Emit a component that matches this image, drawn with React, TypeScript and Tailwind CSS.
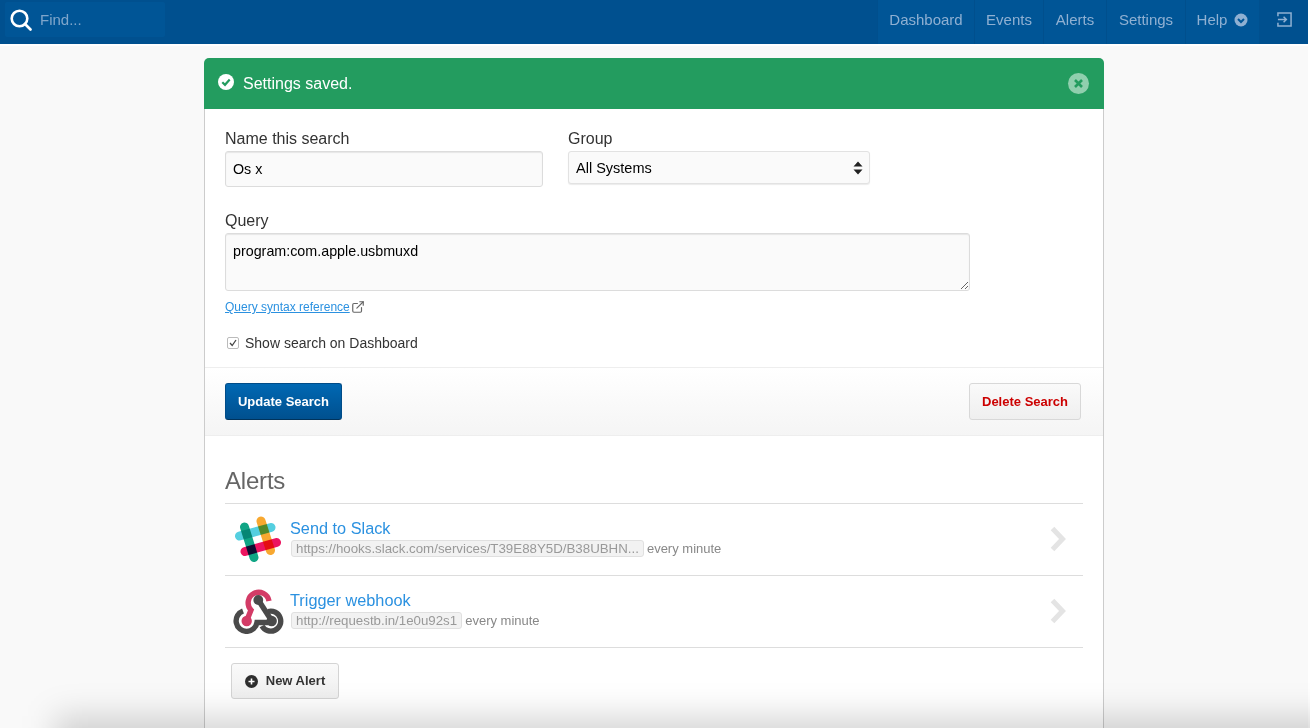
import { ExternalLink } from 'lucide-react';

const SlackLogo = () => (
  <svg width="48" height="48" viewBox="0 0 48 48" className="ml-[2px] shrink-0">
    <g strokeWidth="9" strokeLinecap="round" fill="none">
      <path d="M4.5 20 L36 11.5" stroke="#55cfe0" className="mix-blend-multiply" />
      <path d="M10 35.5 L41.5 26.5" stroke="#ec1560" className="mix-blend-multiply" />
      <path d="M9.5 11 L19 41.5" stroke="#10a585" className="mix-blend-multiply" />
      <path d="M26 5 L35.5 34.5" stroke="#f8a830" className="mix-blend-multiply" />
    </g>
  </svg>
);

const WebhookLogo = () => (
  <svg width="51" height="47" viewBox="0 0 51 47" className="mb-[2px] shrink-0">
    <g fill="none" strokeWidth="5.4">
      <path d="M25.3 13 L38.7 33.7" stroke="#4a4a4a" />
      <path d="M10 24 A10.5 10.5 0 1 0 24 35.5 H38.7" stroke="#4a4a4a" />
      <path d="M35 24.5 A10 10 0 1 1 29 39" stroke="#4a4a4a" />
      <path d="M36 14 A10.5 10.5 0 1 0 18 23 L13.7 33.7" stroke="#d33b66" />
    </g>
    <circle cx="25.3" cy="13" r="4.9" fill="#4a4a4a" />
    <circle cx="13.7" cy="34" r="5.2" fill="#d33b66" />
    <circle cx="38.7" cy="34" r="5.2" fill="#4a4a4a" />
  </svg>
);

const Chevron = () => (
  <svg width="16" height="26" viewBox="0 0 16 26" className="shrink-0">
    <path d="M2.5 2.5 L12.5 13 L2.5 23.5" stroke="#e4e4e4" strokeWidth="5" fill="none" />
  </svg>
);

const navItems = [
  { label: 'Dashboard', w: 'w-[97px]' },
  { label: 'Events', w: 'w-[69px]' },
  { label: 'Alerts', w: 'w-[63px]' },
  { label: 'Settings', w: 'w-[79px]' },
];

const alerts = [
  {
    title: 'Send to Slack',
    url: 'https://hooks.slack.com/services/T39E88Y5D/B38UBHN...',
    logo: <SlackLogo />,
  },
  {
    title: 'Trigger webhook',
    url: 'http://requestb.in/1e0u92s1',
    logo: <WebhookLogo />,
  },
];

export default function App() {
  return (
    <div className="relative h-[728px] overflow-hidden bg-white font-['Liberation_Sans',Arial,sans-serif]">
      <div className="w-[1308px]">
        <header className="flex h-[44px] items-start justify-between bg-[#00508f]">
          <div className="ml-[5px] mt-[2px] flex h-[35px] w-[160px] items-center rounded-[2px] bg-[#005596] pl-[5px]">
            <svg width="22" height="22" viewBox="0 0 22 22">
              <circle cx="9.5" cy="9.5" r="7.8" stroke="white" strokeWidth="2.6" fill="none" />
              <path d="M15 15 L20.5 20.5" stroke="white" strokeWidth="2.6" strokeLinecap="round" />
            </svg>
            <span className="ml-[8px] pt-[1px] text-[15px] text-[#7fa6cb]">Find...</span>
          </div>
          <nav className="flex h-full items-stretch">
            {navItems.map((item) => (
              <div
                key={item.label}
                className={`${item.w} flex items-center justify-center border-l border-[#004f8d] bg-[#005596] pb-[4px] text-[15px] text-[#8fb0d2]`}
              >
                {item.label}
              </div>
            ))}
            <div className="flex w-[74px] items-center justify-center gap-[7px] border-l border-[#004f8d] bg-[#005596] pb-[4px] text-[15px] text-[#8fb0d2]">
              Help
              <svg width="14" height="14" viewBox="0 0 14 14">
                <circle cx="7" cy="7" r="6.5" fill="#8fb0d2" />
                <path d="M4 6 L7 9 L10 6" stroke="#005596" strokeWidth="2" fill="none" />
              </svg>
            </div>
            <div className="flex w-[49px] items-center justify-center pb-[5px] pl-[2px]">
              <svg width="15" height="15" viewBox="0 0 16 16">
                <path d="M1 4.5 V1 H15 V15 H1 V11.5" stroke="#8fb0d2" strokeWidth="1.6" fill="none" />
                <path d="M1 8 H10 M7 5 L10 8 L7 11" stroke="#8fb0d2" strokeWidth="1.6" fill="none" />
              </svg>
            </div>
          </nav>
        </header>

        <main className="mt-[2px] h-[682px] bg-[#f9f9f9] pt-[12px]">
          <div className="mx-auto flex h-full w-[900px] flex-col overflow-hidden rounded-t-[5px]">
            <div className="flex h-[51px] shrink-0 items-center justify-between bg-[#239c5f] pl-[14px] pr-[15px]">
              <div className="flex items-center gap-[9px] text-[16px] text-white">
                <svg width="16" height="16" viewBox="0 0 16 16" className="mb-[3px]">
                  <circle cx="8" cy="8" r="8" fill="white" />
                  <path d="M4.3 8.2 L7 10.8 L11.7 5.6" stroke="#239c5f" strokeWidth="2.2" fill="none" />
                </svg>
                Settings saved.
              </div>
              <div className="flex h-[21px] w-[21px] items-center justify-center rounded-full bg-[#90cfae]">
                <svg width="9" height="9" viewBox="0 0 9 9">
                  <path d="M1 1 L8 8 M8 1 L1 8" stroke="#239c5f" strokeWidth="2.6" />
                </svg>
              </div>
            </div>

            <div className="flex-1 border-x border-[#cccccc] bg-white">
              <div className="px-[20px] pt-[20px]">
                <div className="flex gap-[25px]">
                  <div>
                    <label className="block text-[16px] leading-[20px] text-[#333333]">Name this search</label>
                    <input
                      readOnly
                      value="Os x"
                      className="mt-[2px] block h-[36px] w-[318px] rounded-[3px] border border-[#dcdcdc] bg-[#fafafa] px-[7px] text-[14.3px] text-black shadow-[inset_0_1px_1px_rgba(0,0,0,0.08)] outline-none"
                    />
                  </div>
                  <div>
                    <label className="block text-[16px] leading-[20px] text-[#333333]">Group</label>
                    <div className="relative mt-[2px] flex h-[33px] w-[302px] items-center rounded-[3px] border border-[#e2e2e2] bg-[#fafafa] px-[7px] pt-[2px] text-[14.5px] text-black shadow-[0_1px_1px_rgba(0,0,0,0.08)]">
                      All Systems
                      <svg width="10" height="14" viewBox="0 0 10 14" className="absolute right-[6px] top-[9px]">
                        <path d="M5 0.5 L9.5 5.5 H0.5 Z M5 13.5 L9.5 8.5 H0.5 Z" fill="#222222" />
                      </svg>
                    </div>
                  </div>
                </div>

                <label className="mt-[24px] block text-[16px] leading-[20px] text-[#333333]">Query</label>
                <textarea
                  readOnly
                  value="program:com.apple.usbmuxd"
                  className="mt-[2px] block h-[58px] w-[745px] rounded-[3px] border border-[#dcdcdc] bg-[#fafafa] px-[7px] py-[8px] text-[14.3px] leading-[18px] text-black shadow-[inset_0_1px_1px_rgba(0,0,0,0.08)] outline-none"
                />

                <div className="mt-[9px] flex h-[14px] items-center gap-[1px]">
                  <span className="text-[12px] text-[#2b91e0] underline">Query syntax reference</span>
                  <ExternalLink size={14} strokeWidth={2} className="text-[#666666]" />
                </div>

                <div className="mt-[21px] flex h-[16px] items-center pl-[2px]">
                  <div className="flex h-[12px] w-[12px] items-center justify-center rounded-[2px] border border-[#bbbbbb] bg-white">
                    <svg width="10" height="10" viewBox="0 0 10 10">
                      <path d="M2 5 L4.2 7.5 L8 2" stroke="#444444" strokeWidth="1.3" fill="none" />
                    </svg>
                  </div>
                  <span className="ml-[6px] text-[14px] text-[#333333]">Show search on Dashboard</span>
                </div>
              </div>

              <div className="mt-[16px] flex h-[69px] items-center justify-between border-y border-[#eeeeee] bg-gradient-to-b from-white to-[#f5f5f5] pl-[20px] pr-[22px]">
                <button className="h-[37px] w-[117px] rounded-[3px] border border-[#004c88] border-b-[#00335c] bg-gradient-to-b from-[#0068b3] to-[#00508f] text-[13px] font-bold text-white">
                  Update Search
                </button>
                <button className="h-[37px] w-[112px] rounded-[3px] border border-[#d8d8d8] bg-gradient-to-b from-[#fafafa] to-[#efefef] text-[13px] font-bold text-[#cc0000]">
                  Delete Search
                </button>
              </div>

              <div className="pl-[20px] pr-[20px]">
                <h2 className="mt-[30px] h-[37px] text-[24px] leading-[30px] tracking-[-0.2px] text-[#666666]">Alerts</h2>
                <ul className="w-[858px] border-t border-[#dddddd]">
                  {alerts.map((alert) => (
                    <li key={alert.title} className="flex h-[72px] items-center border-b border-[#dddddd]">
                      <div className="flex w-[65px] pl-[8px]">{alert.logo}</div>
                      <div className="min-w-0 flex-1 pb-[4px]">
                        <div className="text-[16.3px] leading-[20px] text-[#2b91e0]">{alert.title}</div>
                        <div className="mt-[1px] flex items-center text-[13px] leading-[18px] text-[#888888]">
                          <span className="ml-[1px] rounded-[3px] border border-[#e0e0e0] bg-[#f2f2f2] px-[4px] text-[13.3px] leading-[15px] text-[#999999]">
                            {alert.url}
                          </span>
                          <span className="ml-[3px] pt-[1px]">every minute</span>
                        </div>
                      </div>
                      <div className="mr-[17px] pb-[2px]">
                        <Chevron />
                      </div>
                    </li>
                  ))}
                </ul>
                <button className="mt-[15px] ml-[6px] flex h-[36px] w-[108px] items-center justify-center gap-[8px] rounded-[3px] border border-[#d4d4d4] bg-gradient-to-b from-[#fafafa] to-[#efefef] text-[13px] font-bold text-[#333333]">
                  <svg width="13" height="13" viewBox="0 0 13 13">
                    <circle cx="6.5" cy="6.5" r="6.5" fill="#2e2e2e" />
                    <path d="M6.5 3.5 V9.5 M3.5 6.5 H9.5" stroke="white" strokeWidth="1.6" />
                  </svg>
                  New Alert
                </button>
              </div>
            </div>
          </div>
        </main>
      </div>

      {/* window shadow lying over the bottom of the page */}
      <div className="pointer-events-none absolute bottom-[-50px] left-[55px] right-[-60px] h-[62px] bg-black/[0.16] blur-[16px]" />
    </div>
  );
}
